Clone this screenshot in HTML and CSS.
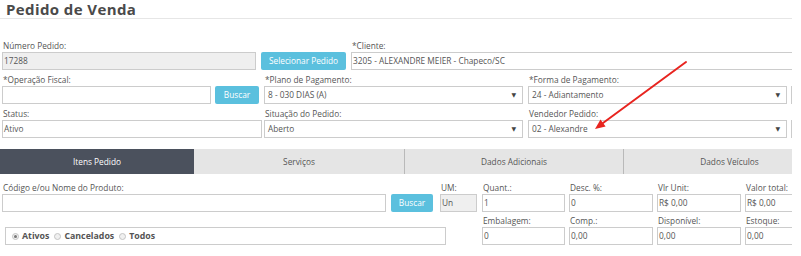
FILE: index.html
```html
<!DOCTYPE html>
<html lang="pt-BR">
<head>
<meta charset="utf-8">
<title>Pedido de Venda</title>
<link rel="stylesheet" href="styles.css">
</head>
<body>
<div class="page">
  <h1 class="title">Pedido de Venda</h1>

  <div class="form">
    <div class="row">
      <div class="field w254">
        <label class="lbl">Número Pedido:</label>
        <div class="box dis">17288</div>
      </div>
      <div class="btn w85 ml5">Selecionar Pedido</div>
      <div class="field w460 ml5">
        <label class="lbl">*Cliente:</label>
        <div class="box">3205 - ALEXANDRE MEIER - Chapeco/SC</div>
      </div>
    </div>

    <div class="row">
      <div class="field w260">
        <label class="lbl">*Operação Fiscal:</label>
        <div class="pair">
          <div class="box w209"></div>
          <div class="btn w44">Buscar</div>
        </div>
      </div>
      <div class="field w259 ml2">
        <label class="lbl">*Plano de Pagamento:</label>
        <div class="box sel">8 - 030 DIAS (A)<span class="caret">▼</span></div>
      </div>
      <div class="field w259 ml5">
        <label class="lbl">*Forma de Pagamento:</label>
        <div class="box sel">24 - Adiantamento<span class="caret">▼</span></div>
      </div>
      <div class="field w200 ml4">
        <label class="lbl"></label>
        <div class="box sel"></div>
      </div>
    </div>

    <div class="row">
      <div class="field w260">
        <label class="lbl">Status:</label>
        <div class="box">Ativo</div>
      </div>
      <div class="field w259 ml2">
        <label class="lbl">Situação do Pedido:</label>
        <div class="box sel">Aberto<span class="caret">▼</span></div>
      </div>
      <div class="field w259 ml5">
        <label class="lbl">Vendedor Pedido:</label>
        <div class="box sel">02 - Alexandre<span class="caret">▼</span></div>
      </div>
      <div class="field w200 ml4">
        <label class="lbl"></label>
        <div class="box sel"></div>
      </div>
    </div>
  </div>

  <div class="tabs">
    <div class="tab active t194">Itens Pedido</div>
    <div class="tab t210">Serviços</div>
    <div class="tab sep t219">Dados Adicionais</div>
    <div class="tab sep t212">Dados Veículos</div>
  </div>

  <div class="items">
    <div class="row r1">
      <div class="field w384">
        <label class="lbl">Código e/ou Nome do Produto:</label>
        <div class="box"></div>
      </div>
      <div class="btn w42 ml5">Buscar</div>
      <div class="field w37 ml7">
        <label class="lbl">UM:</label>
        <div class="box dis">Un</div>
      </div>
      <div class="field w83 ml5">
        <label class="lbl">Quant.:</label>
        <div class="box">1</div>
      </div>
      <div class="field w84 ml4">
        <label class="lbl">Desc. %:</label>
        <div class="box">0</div>
      </div>
      <div class="field w84 ml4">
        <label class="lbl">Vlr Unit:</label>
        <div class="box">R$ 0,00</div>
      </div>
      <div class="field w84 ml4">
        <label class="lbl">Valor total:</label>
        <div class="box">R$ 0,00</div>
      </div>
    </div>

    <div class="row r2">
      <div class="radios">
        <span class="radio on"></span><span class="rlbl">Ativos</span>
        <span class="radio"></span><span class="rlbl">Cancelados</span>
        <span class="radio"></span><span class="rlbl">Todos</span>
      </div>
      <div class="field w83 ml36">
        <label class="lbl">Embalagem:</label>
        <div class="box">0</div>
      </div>
      <div class="field w84 ml4">
        <label class="lbl">Comp.:</label>
        <div class="box">0,00</div>
      </div>
      <div class="field w84 ml4">
        <label class="lbl">Disponível:</label>
        <div class="box">0,00</div>
      </div>
      <div class="field w84 ml4">
        <label class="lbl">Estoque:</label>
        <div class="box">0,00</div>
      </div>
    </div>
  </div>

  <svg class="arrow" width="801" height="256" viewBox="0 0 801 256">
    <line x1="686" y1="62" x2="603" y2="123" stroke="#e8241f" stroke-width="2" stroke-linecap="round"/>
    <polygon points="595,129 605.6,126.6 600.5,119.6" fill="#e8241f"/>
  </svg>
</div>
</body>
</html>
```

FILE: styles.css
```css
html, body {
  margin: 0;
  padding: 0;
  background: #fff;
}

body {
  font-family: "Open Sans", "DejaVu Sans", sans-serif;
  color: #555;
}

.page {
  position: relative;
  width: 792px;
  height: 256px;
  overflow: hidden;
}

.title {
  margin: 0;
  padding-left: 6px;
  height: 18px;
  line-height: 18px;
  font-size: 15px;
  letter-spacing: 0.4px;
  font-weight: 700;
  color: #4a4a4a;
  border-bottom: 1px solid #e6e6e6;
}

.form {
  padding: 19px 0 0 2px;
}

.row {
  display: flex;
  align-items: flex-end;
  flex-wrap: nowrap;
  margin-bottom: 2px;
}

.field {
  display: flex;
  flex-direction: column;
  flex: none;
}

.lbl {
  display: block;
  height: 14px;
  line-height: 15px;
  font-size: 8.3px;
  padding-left: 1px;
  color: #555;
  white-space: nowrap;
}

.box {
  box-sizing: border-box;
  height: 18px;
  line-height: 16px;
  border: 1px solid #ccc;
  background: #fff;
  font-size: 8.3px;
  color: #555;
  padding: 0 1px;
  white-space: nowrap;
  overflow: hidden;
}

.box.dis {
  background: #efefef;
}

.box.sel {
  position: relative;
  padding: 0 3px;
}

.caret {
  position: absolute;
  right: 6px;
  top: 0;
  font-size: 6px;
  color: #444;
}

.pair {
  display: flex;
  gap: 4px;
}

.btn {
  flex: none;
  box-sizing: border-box;
  height: 18px;
  line-height: 18px;
  border-radius: 2px;
  background: #5bc0de;
  color: #fff;
  font-size: 8.3px;
  text-align: center;
  white-space: nowrap;
}

.tabs {
  display: flex;
  margin-top: 11px;
  height: 25px;
  width: 835px;
}

.tab {
  flex: none;
  box-sizing: border-box;
  height: 25px;
  line-height: 25px;
  background: #e5e5e5;
  color: #555;
  font-size: 8.3px;
  text-align: center;
  white-space: nowrap;
}

.tab.active {
  background: #4b515d;
  color: #fff;
}

.tab.sep {
  border-left: 1px solid #b9b9b9;
}

.items {
  padding-left: 2px;
}

.items .r1 {
  margin-top: 6px;
  margin-bottom: 1px;
}

.radios {
  flex: none;
  box-sizing: border-box;
  display: flex;
  align-items: center;
  margin-left: 3px;
  width: 441px;
  height: 18px;
  border: 1px solid #ccc;
  padding-left: 6px;
  font-size: 8.8px;
  font-weight: 700;
  color: #555;
}

.radio {
  box-sizing: border-box;
  position: relative;
  width: 7px;
  height: 7px;
  border-radius: 50%;
  border: 1px solid #c4c4c4;
  background: #f0f0f0;
  margin-right: 3px;
}

.radio.on::after {
  content: "";
  position: absolute;
  left: 1px;
  top: 1px;
  width: 3px;
  height: 3px;
  border-radius: 50%;
  background: #777;
}

.rlbl {
  margin-right: 5px;
}

.arrow {
  position: absolute;
  left: 0;
  top: 0;
  pointer-events: none;
}

.w37 { width: 37px; }
.w42 { width: 42px; }
.w44 { width: 44px; }
.w83 { width: 83px; }
.w84 { width: 84px; }
.w85 { width: 85px; }
.w200 { width: 200px; }
.w209 { width: 209px; }
.w254 { width: 254px; }
.w259 { width: 259px; }
.w260 { width: 260px; }
.w384 { width: 384px; }
.w460 { width: 460px; }

.t194 { width: 194px; }
.t210 { width: 210px; }
.t219 { width: 219px; }
.t212 { width: 212px; }

.ml2 { margin-left: 2px; }
.ml4 { margin-left: 4px; }
.ml5 { margin-left: 5px; }
.ml7 { margin-left: 7px; }
.ml36 { margin-left: 36px; }
```
